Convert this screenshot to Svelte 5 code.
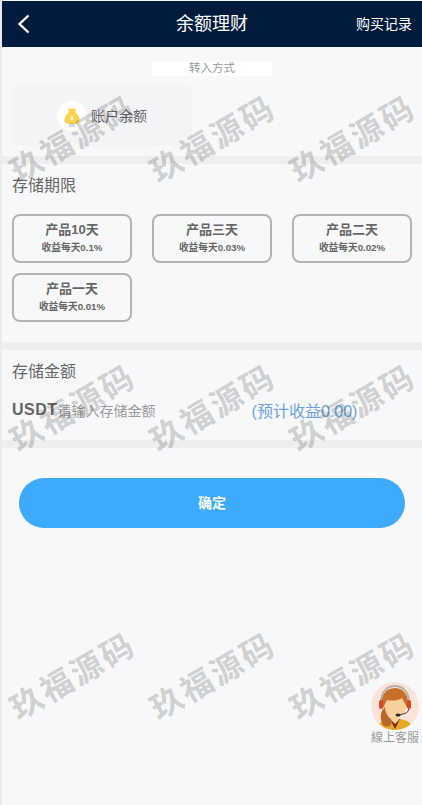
<script>
  const products = [
    { name: '产品10天', rate: '收益每天0.1%' },
    { name: '产品三天', rate: '收益每天0.03%' },
    { name: '产品二天', rate: '收益每天0.02%' },
    { name: '产品一天', rate: '收益每天0.01%' }
  ];
  const marks = Array.from({ length: 9 }, (_, i) => i);
</script>

<div class="page">
  <header class="bar">
    <svg class="back" viewBox="0 0 14 20" width="14" height="20" aria-hidden="true">
      <path d="M11.5 1.5 L2.5 10 L11.5 18.5" fill="none" stroke="#fff" stroke-width="2.4" />
    </svg>
    <h1>余额理财</h1>
    <span class="records">购买记录</span>
  </header>

  <section class="method">
    <div class="method-label">转入方式</div>
    <div class="account">
      <span class="coin">
        <svg viewBox="0 0 16 18" width="16" height="18" aria-hidden="true">
          <path d="M3.5 1 L6 2.4 L8 1 L10 2.4 L12.5 1 L11 5 C14 7.5 15.5 10.500 15.500 13 C15.500 16 13.500 17 8 17 C2.500 17 .5 16 .5 13 C.5 10.500 2 7.500 5 5 Z" fill="#fcd249" />
          <path d="M6 8.500 L8 11 L10 8.500 M8 11 V14.500 M6.300 12 H9.700" fill="none" stroke="#fff" stroke-width=".9" />
        </svg>
      </span>
      <span class="account-name">账户余额</span>
    </div>
  </section>

  <div class="rule"></div>

  <section class="terms">
    <h2>存储期限</h2>
    <div class="products">
      {#each products as p}
        <div class="product">
          <div class="p-name">{p.name}</div>
          <div class="p-rate">{p.rate}</div>
        </div>
      {/each}
    </div>
  </section>

  <div class="rule"></div>

  <section class="amount">
    <h2>存储金额</h2>
    <div class="amount-row">
      <b>USDT</b><span class="placeholder">请输入存储金额</span>
      <span class="estimate">(预计收益0.00)</span>
    </div>
  </section>

  <div class="rule"></div>

  <div class="submit-wrap">
    <button class="submit">确定</button>
  </div>

  <div class="support">
    <svg viewBox="0 0 48 48" width="48" height="48" aria-hidden="true">
      <defs><clipPath id="disc"><circle cx="24" cy="24" r="24" /></clipPath></defs>
      <g clip-path="url(#disc)">
        <rect width="48" height="48" fill="#fae3d8" />
        <path d="M5 48 C6 41 13 38 19 37 H29 C36 38 41 41 43 48 Z" fill="#e6aa22" />
        <path d="M19 37 L24 47 L29 37 Z" fill="#7a2420" />
        <path d="M20 30 H28 V38 L24 42 L20 38 Z" fill="#fbcf9c" />
        <path d="M11 24 C9 15 14 6 24 6 C34 6 38 15 37 24 L35 25 L32 15 L24 16 L15 18 L14 26 Z" fill="#c8702a" />
        <ellipse cx="24" cy="24" rx="11" ry="12" fill="#fbcf9c" />
        <path d="M13 24 C12 16 17 10 24 10 C31 10 36 15 35 23 C33 20 32 18 31 16 C27 19 20 19 16 18 C15 20 14 22 13 24 Z" fill="#c8702a" />
        <path d="M14 25 C8 30 9 40 13 44 C19 46 22 42 20 37 C16 34 14 30 14 25 Z" fill="#bb6826" />
        <path d="M10 20 C10 9 17 4 24 4 C31 4 38 9 38 20" fill="none" stroke="#b5b0aa" stroke-width="1.800" />
        <rect x="8" y="18" width="4" height="9" rx="2" fill="#d8481f" />
        <rect x="36" y="18" width="4" height="9" rx="2" fill="#d8481f" />
        <path d="M38 27 C37 31 33 32 28 33" fill="none" stroke="#333" stroke-width="1" />
        <ellipse cx="27" cy="33" rx="2.500" ry="1.500" fill="#2b2b2b" />
      </g>
    </svg>
    <span>線上客服</span>
  </div>

  <div class="marks" aria-hidden="true">
    {#each marks as m}
      <span class="mark">玖福源码</span>
    {/each}
  </div>
</div>

<style>
  :global(body) {
    margin: 0;
    background: #f7f8fa;
  }
  .page {
    position: relative;
    box-sizing: border-box;
    width: 422px;
    height: 805px;
    overflow: hidden;
    padding-top: 1px;
    border-left: 2px solid #ebebed;
    background: #f7f8fa;
    color: #666;
    font-family: "Liberation Sans", "Noto Sans CJK SC", sans-serif;
  }
  .bar {
    display: flex;
    align-items: center;
    justify-content: space-between;
    position: relative;
    height: 46px;
    padding: 0 10px 0 15px;
    background: #011b3d;
    color: #fff;
  }
  .back { display: block; }
  .bar h1 {
    position: absolute;
    left: 0;
    right: 0;
    margin: 0;
    text-align: center;
    font-size: 18px;
    font-weight: 400;
    line-height: 46px;
  }
  .records {
    font-size: 14px;
    line-height: 46px;
  }
  .method {
    height: 109px;
    box-sizing: border-box;
    padding: 14px 10px 0;
  }
  .method-label {
    width: 120px;
    height: 15px;
    margin: 0 auto;
    background: #fff;
    color: #999;
    font-size: 11.500px;
    line-height: 15px;
    text-align: center;
  }
  .account {
    display: flex;
    align-items: center;
    width: 180px;
    height: 60px;
    margin-top: 10px;
    padding-left: 45px;
    box-sizing: border-box;
    border-radius: 4px;
    background: #f3f4f6;
  }
  .coin {
    display: flex;
    align-items: center;
    justify-content: center;
    width: 30px;
    height: 30px;
    border-radius: 50%;
    background: #fff;
  }
  .account-name {
    margin: -2px 0 0 4px;
    font-size: 14px;
    color: #666;
  }
  .rule {
    height: 8px;
    background: #eeeeef;
  }
  h2 {
    margin: 0;
    font-size: 16px;
    font-weight: 400;
    line-height: 24px;
    color: #666;
  }
  .terms {
    height: 178px;
    box-sizing: border-box;
    padding: 10px 10px 0;
  }
  .products {
    display: grid;
    grid-template-columns: repeat(3, 120px);
    grid-auto-rows: 49px;
    gap: 10px 20px;
    margin-top: 16px;
  }
  .product {
    box-sizing: border-box;
    border: 2px solid #b3b3b6;
    border-radius: 8px;
    text-align: center;
    color: #666;
  }
  .p-name {
    margin-top: 5px;
    font-size: 13px;
    font-weight: 700;
    line-height: 18px;
  }
  .p-rate {
    margin-top: 1px;
    font-size: 9.700px;
    font-weight: 700;
    line-height: 15px;
  }
  .amount {
    height: 90px;
    box-sizing: border-box;
    padding: 10px 10px 0;
  }
  .amount-row {
    display: flex;
    align-items: center;
    height: 24px;
    margin-top: 14px;
  }
  .amount-row b {
    font-size: 16px;
    letter-spacing: .5px;
    color: #666;
  }
  .placeholder {
    font-size: 14px;
    color: #999;
  }
  .estimate {
    margin-left: 96px;
    font-size: 16px;
    color: #6aa3e0;
  }
  .submit-wrap {
    padding: 30px 17px 0 17px;
  }
  .submit {
    display: block;
    width: 100%;
    height: 50px;
    padding: 0 0 2px;
    border: 0;
    border-radius: 25px;
    background: #3eaafb;
    color: #fff;
    font: 700 14px "Liberation Sans", "Noto Sans CJK SC", sans-serif;
  }
  .support {
    position: absolute;
    right: 3px;
    top: 682px;
    display: flex;
    flex-direction: column;
    align-items: center;
    width: 48px;
    color: #999;
    font-size: 12px;
    line-height: 16px;
    font-family: "Liberation Sans", "Noto Sans CJK TC", sans-serif;
  }
  .support svg { display: block; }
  .support span { white-space: nowrap; }
  .marks {
    position: absolute;
    left: -2px;
    top: 0;
    width: 422px;
    pointer-events: none;
  }
  .mark {
    position: absolute;
    width: 139px;
    text-align: center;
    transform: rotate(-30deg);
    font-size: 32px;
    font-weight: 700;
    line-height: 40px;
    letter-spacing: 2.700px;
    white-space: nowrap;
    color: rgba(0, 0, 0, 0.18);
    font-family: "Noto Sans CJK SC", sans-serif;
  }
  .mark:nth-child(3n + 1) { left: 2px; }
  .mark:nth-child(3n + 2) { left: 142px; }
  .mark:nth-child(3n) { left: 282px; }
  .mark:nth-child(-n + 3) { top: 117px; }
  .mark:nth-child(n + 4):nth-child(-n + 6) { top: 386px; }
  .mark:nth-child(n + 7) { top: 654px; }
</style>
